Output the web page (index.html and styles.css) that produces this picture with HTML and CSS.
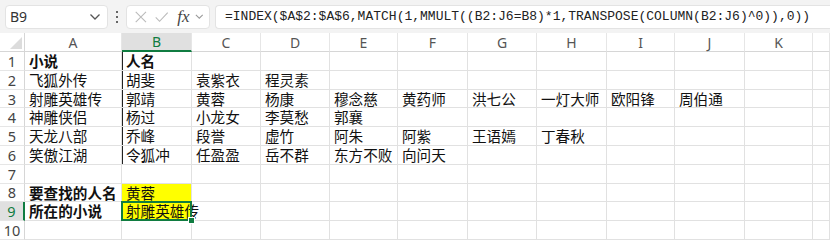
FILE: index.html
```html
<!DOCTYPE html>
<html lang="zh-CN">
<head>
    <meta charset="UTF-8">
    <title>INDEX MATCH 查找</title>
    <link rel="stylesheet" href="styles.css">
</head>
<body>
    <div class="formula-bar">
        <div class="name-box">
            <span>B9</span>
            <svg class="chevron" width="12" height="8" viewBox="0 0 12 8"><path d="M1.5 1.5 L6 6 L10.5 1.5" fill="none" stroke="#555" stroke-width="1.3"/></svg>
        </div>
        <div class="grip">
            <span></span><span></span><span></span>
        </div>
        <div class="fx-box">
            <svg width="16" height="16" viewBox="0 0 16 16"><path d="M2 2 L14 14 M14 2 L2 14" stroke="#bbb" stroke-width="1.3"/></svg>
            <svg width="18" height="16" viewBox="0 0 18 16"><path d="M2 8.5 L6.5 13 L16 3" fill="none" stroke="#bbb" stroke-width="1.3"/></svg>
            <span class="fx">fx</span>
            <svg class="chevron" width="10" height="7" viewBox="0 0 10 7"><path d="M1 1.5 L5 5.5 L9 1.5" fill="none" stroke="#999" stroke-width="1.2"/></svg>
        </div>
        <div class="formula-box">=INDEX($A$2:$A$6,MATCH(1,MMULT((B2:J6=B8)*1,TRANSPOSE(COLUMN(B2:J6)^0)),0))</div>
    </div>

    <div class="sheet" id="sheet"></div>

    <script>
        const cols = ['A', 'B', 'C', 'D', 'E', 'F', 'G', 'H', 'I', 'J', 'K', ''];
        const data = [
            ['小说', '人名'],
            ['飞狐外传', '胡斐', '袁紫衣', '程灵素'],
            ['射雕英雄传', '郭靖', '黄蓉', '杨康', '穆念慈', '黄药师', '洪七公', '一灯大师', '欧阳锋', '周伯通'],
            ['神雕侠侣', '杨过', '小龙女', '李莫愁', '郭襄'],
            ['天龙八部', '乔峰', '段誉', '虚竹', '阿朱', '阿紫', '王语嫣', '丁春秋'],
            ['笑傲江湖', '令狐冲', '任盈盈', '岳不群', '东方不败', '向问天'],
            [],
            ['要查找的人名', '黄蓉'],
            ['所在的小说', '射雕英雄传'],
            []
        ];

        const sheet = document.getElementById('sheet');
        let html = '<div class="corner"><span class="tri"></span></div>';
        cols.forEach(c => {
            html += `<div class="col-head${c === 'B' ? ' active' : ''}">${c}</div>`;
        });
        data.forEach((row, r) => {
            const n = r + 1;
            html += `<div class="row-head${n === 9 ? ' active' : ''}">${n}</div>`;
            cols.forEach((c, i) => {
                let cls = 'cell';
                if ((n === 1 || n === 8 || n === 9) && i === 0) cls += ' bold';
                if (n === 1 && i === 1) cls += ' bold';
                if (i === 1 && n <= 6) cls += ' edge';
                if (i === 1 && (n === 8 || n === 9)) cls += ' yellow';
                if (i === 1 && n === 9) cls += ' selected';
                html += `<div class="${cls}"><span>${row[i] || ''}</span></div>`;
            });
        });
        sheet.innerHTML = html;
    </script>
</body>
</html>
```

FILE: styles.css
```css
body {
    margin: 0;
    width: 830px;
    height: 242px;
    overflow: hidden;
    background: #fff;
    font-family: "Noto Sans CJK SC", "Noto Sans", sans-serif;
}
.formula-bar {
    display: flex;
    align-items: center;
    height: 33px;
    padding: 0 0 0 5px;
    background: #f3f3f3;
    box-sizing: border-box;
}
.name-box, .fx-box, .formula-box {
    height: 24px;
    background: #fff;
    border: 1px solid #e3e3e3;
    border-radius: 4px;
    box-sizing: border-box;
    display: flex;
    align-items: center;
}
.name-box {
    width: 103px;
    padding: 0 6px 0 4px;
    justify-content: space-between;
    font-family: "Segoe UI", "Noto Sans", sans-serif;
    font-size: 14px;
    color: #333;
}
.grip {
    width: 18px;
    display: flex;
    flex-direction: column;
    align-items: center;
    gap: 3px;
}
.grip span {
    width: 2px;
    height: 2px;
    background: #666;
}
.fx-box {
    width: 84px;
    padding: 0 5px 0 7px;
    gap: 6px;
}
.fx {
    font-family: "Liberation Serif", serif;
    font-style: italic;
    font-size: 17px;
    color: #444;
    margin-left: 2px;
}
.formula-box {
    flex: 1;
    margin-left: 5px;
    padding-left: 9px;
    border-right: none;
    border-radius: 4px 0 0 4px;
    font-family: "Liberation Mono", monospace;
    font-size: 13px;
    color: #222;
    white-space: nowrap;
    overflow: hidden;
}
.sheet {
    display: grid;
    grid-template-columns: 25px 97px 70px 69px 69px 68px 70px 69px 70px 68px 70px 68px 17px;
    grid-template-rows: 19px repeat(10, 18.8px);
}
.corner {
    position: relative;
    border-bottom: 1px solid #d6d6d6;
    border-right: 1px solid #d6d6d6;
    box-sizing: border-box;
}
.tri {
    position: absolute;
    right: 2px;
    bottom: 2px;
    width: 0;
    height: 0;
    border-left: 12px solid transparent;
    border-bottom: 12px solid #dcdcdc;
}
.col-head {
    display: flex;
    align-items: center;
    justify-content: center;
    font-size: 14px;
    color: #555;
    font-family: "Segoe UI", "Noto Sans", sans-serif;
    border-bottom: 1px solid #d6d6d6;
    border-right: 1px solid #e6e6e6;
    box-sizing: border-box;
}
.col-head.active {
    background: #e0e0e0;
    color: #107c41;
    border-bottom: 2px solid #107c41;
}
.row-head {
    display: flex;
    align-items: center;
    justify-content: center;
    font-size: 14.5px;
    color: #444;
    font-family: "Segoe UI", "Noto Sans", sans-serif;
    border-right: 1px solid #d6d6d6;
    border-bottom: 1px solid #e6e6e6;
    box-sizing: border-box;
}
.row-head.active {
    background: #e0e0e0;
    color: #107c41;
    border-right: 2px solid #107c41;
}
.cell {
    font-size: 14.6px;
    line-height: 18px;
    color: #111;
    padding-left: 4px;
    white-space: nowrap;
    border-right: 1px solid #e1e1e1;
    border-bottom: 1px solid #e1e1e1;
    box-sizing: border-box;
}
.cell span {
    display: inline-block;
    height: 17px;
    line-height: 17px;
    vertical-align: top;
}
.bold {
    font-weight: bold;
}
.edge {
    box-shadow: inset 1px 0 0 #222;
}
.yellow {
    background: #ffff00;
}
.selected {
    position: relative;
}
.selected::after {
    content: "";
    position: absolute;
    left: -1px;
    top: -1px;
    right: -1px;
    bottom: -1px;
    border: 2px solid #107c41;
}
.selected::before {
    content: "";
    position: absolute;
    right: -4px;
    bottom: -4px;
    width: 5px;
    height: 5px;
    background: #107c41;
    border: 1px solid #fff;
    z-index: 1;
}
```
